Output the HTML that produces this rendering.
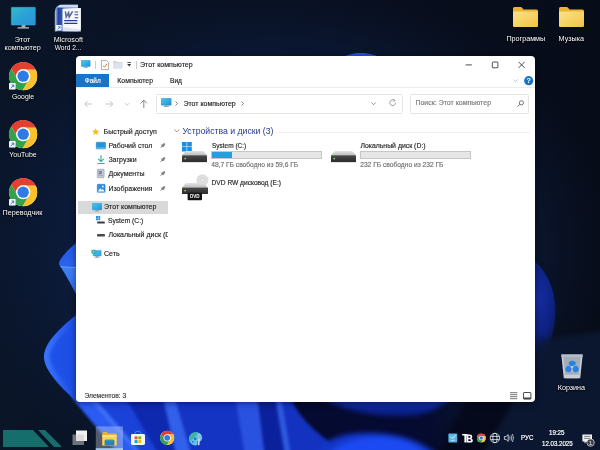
<!DOCTYPE html>
<html><head><meta charset="utf-8">
<style>
*{margin:0;padding:0;box-sizing:border-box}
html,body{width:600px;height:450px;overflow:hidden;background:#0a1224;font-family:"Liberation Sans",sans-serif}
#root{position:relative;width:600px;height:450px;overflow:hidden;background:#0a1226;filter:blur(0.35px)}
#wall{position:absolute;left:0;top:0}
.a{position:absolute}
svg{position:absolute;overflow:visible}
.dl{position:absolute;color:#fff;font-size:7.2px;line-height:9px;height:9px;text-align:center;text-shadow:0 0 1.5px #000,0 0.6px 1px rgba(0,0,0,.9);white-space:nowrap;transform:translateX(-50%)}
#win{position:absolute;left:76px;top:56px;width:459px;height:346px;background:#fff;border-radius:4px;box-shadow:0 1px 6px rgba(0,0,0,.5)}
.t{position:absolute;white-space:nowrap;font-size:7px;line-height:10px;height:10px;color:#1c1c1c;-webkit-text-stroke:0.14px currentColor}
.g{color:#6e6e6e}
</style></head>

<body><div id="root">
<svg id="wall" width="600" height="450" viewBox="0 0 600 450">
<defs>
<linearGradient id="bg" x1="0" y1="0" x2="1" y2="0"><stop offset="0" stop-color="#0a1528"/><stop offset=".6" stop-color="#080e1e"/><stop offset="1" stop-color="#070c19"/></linearGradient>
<radialGradient id="bgv" gradientUnits="userSpaceOnUse" cx="280" cy="250" r="330" gradientTransform="translate(280 250) scale(1 .82) translate(-280 -250)"><stop offset="0" stop-color="#0f2654" stop-opacity="1"/><stop offset=".5" stop-color="#0d2048" stop-opacity=".95"/><stop offset=".78" stop-color="#0b1a38" stop-opacity=".6"/><stop offset="1" stop-color="#0a152c" stop-opacity="0"/></radialGradient>
<linearGradient id="pa" gradientUnits="userSpaceOnUse" x1="0" y1="243" x2="0" y2="296"><stop offset="0" stop-color="#2556e4"/><stop offset=".44" stop-color="#2c62ec"/><stop offset=".47" stop-color="#3f80f6"/><stop offset="1" stop-color="#2e6af0"/></linearGradient>
<linearGradient id="pb" x1="0" y1="0" x2="1" y2="0"><stop offset="0" stop-color="#3a76fc"/><stop offset=".5" stop-color="#2a5ef0"/><stop offset="1" stop-color="#1a48e0"/></linearGradient>
<linearGradient id="bot" gradientUnits="userSpaceOnUse" x1="76" y1="0" x2="480" y2="0"><stop offset="0" stop-color="#2457ee"/><stop offset=".12" stop-color="#1236c6"/><stop offset=".24" stop-color="#1a44dc"/><stop offset=".42" stop-color="#1737cc"/><stop offset=".52" stop-color="#0c22a4"/><stop offset=".62" stop-color="#07126a"/><stop offset=".9" stop-color="#050a34"/><stop offset="1" stop-color="#080f24"/></linearGradient>
<radialGradient id="pr" gradientUnits="userSpaceOnUse" cx="538" cy="298" r="62" gradientTransform="translate(538 298) scale(.42 1) translate(-538 -298)"><stop offset="0" stop-color="#142ea4"/><stop offset=".55" stop-color="#0e2284"/><stop offset="1" stop-color="#081240"/></radialGradient>
<linearGradient id="tl" x1="0" y1="0" x2="0" y2="1"><stop offset="0" stop-color="#1434c4"/><stop offset="1" stop-color="#081a78"/></linearGradient>
<linearGradient id="fr" gradientUnits="userSpaceOnUse" x1="288" y1="0" x2="482" y2="0"><stop offset="0" stop-color="#050a30" stop-opacity="1"/><stop offset=".68" stop-color="#050a30" stop-opacity="1"/><stop offset=".96" stop-color="#050a30" stop-opacity="0"/><stop offset="1" stop-color="#050a30" stop-opacity="0"/></linearGradient>
<filter id="b1" color-interpolation-filters="sRGB"><feGaussianBlur stdDeviation="0.6"/></filter>
<filter id="b2" color-interpolation-filters="sRGB"><feGaussianBlur stdDeviation="1.6"/></filter>
<filter id="b3" color-interpolation-filters="sRGB"><feGaussianBlur stdDeviation="2.4"/></filter>
<filter id="b8" color-interpolation-filters="sRGB"><feGaussianBlur stdDeviation="8"/></filter>
</defs>
<rect width="600" height="450" fill="url(#bg)"/>
<rect width="600" height="450" fill="url(#bgv)"/>
<!-- right dark bloom glow -->
<path d="M530 258 C546 268 556 290 555.5 312 C555 336 546 360 530 380Z" fill="url(#pr)" filter="url(#b1)"/>
<!-- bottom blue body -->
<path d="M82 300 L82 398 L76.5 402 L97.5 427 L119 453 L300 453 L300 300 L82 300Z" fill="url(#bot)" filter="url(#b2)"/>
<!-- bottom bands -->
<g filter="url(#b2)">
  <path d="M71.0 396 L87.3 396 L138.1 454 L119.3 454Z" fill="#2a5cf2"/>
  <path d="M86.8 396 L93.5 396 L143.0 454 L137.5 454Z" fill="#3f72f8"/>
  <path d="M92.9 396 L125.1 396 L158.9 454 L142.4 454Z" fill="#1a42d8"/>
  <path d="M124.5 396 L163.2 396 L176.5 454 L158.3 454Z" fill="#0e29ae"/>
  <path d="M162.6 396 L174.8 396 L191.8 454 L175.9 454Z" fill="#3160ea"/>
  <path d="M174.2 396 L235.6 396 L245.3 454 L191.2 454Z" fill="#1434c4"/>
  <path d="M235.0 396 L257.9 396 L265.1 454 L244.7 454Z" fill="#2a52e0"/>
  <path d="M257.2 396 L275.6 396 L285.3 454 L264.5 454Z" fill="#0b209c"/>
  <path d="M275.0 396 L281.6 396 L291.3 454 L284.7 454Z" fill="#2e5ae0"/>
  <path d="M281.0 396 L330.6 396 L330.6 454 L290.7 454Z" fill="#1432c0"/>
</g>
<!-- bottom details -->
<g filter="url(#b2)">
  <path d="M290 396 L482 396 L482 456 L350 456 C332 444 300 424 290 396Z" fill="url(#fr)"/>
</g>
<g filter="url(#b3)">
  <path d="M318 396 C345 412 385 420 418 415 C434 411 446 404 452 396Z" fill="url(#tl)"/>
  <path d="M312 458 C316 448 326 440 344 435 C385 428 422 438 440 458Z" fill="#1236c8"/>
  <path d="M326 458 C335 446 350 438 375 437 C402 437 420 444 430 458Z" fill="#1c4af2"/>
</g>
<path d="M338 60 C346 54.5 354 53 361 53 C369 53 377 55 384 60Z" fill="#2a52e4" filter="url(#b1)"/>
<g filter="url(#b3)">
  <path d="M468 398 L514 398 L480 456 L436 456Z" fill="#04071a" opacity=".75"/>
  <path d="M516 398 L540 340 L610 330 L610 456 L482 456Z" fill="#0c1934" opacity=".85"/>
</g>
<!-- petal A -->
<path d="M80 239 L76 243 C70 248 62 256 59.6 261 C58.6 263.5 59 265.5 61 267.4 C66 275 72 286 76 294 L80 300Z" fill="url(#pa)" filter="url(#b1)"/>
<path d="M60.5 266.6 C66 267.2 72 267.4 80 267.8" stroke="#6ea4ff" stroke-width="0.9" fill="none" filter="url(#b1)"/>
<!-- petal B -->
<path d="M80 312 C62 326 44 342 44 357 C44 371 62 388 76.5 402 L80 406Z" fill="url(#pb)" filter="url(#b1)"/>
<path d="M80 319 C66 330 50 345 50 357 C50 369 66 384 80 398Z" fill="#1d4fe6" opacity=".9" filter="url(#b2)"/>
</svg>

<svg width="0" height="0" style="position:absolute">
<defs>
<linearGradient id="mon" x1="0" y1="0" x2="1" y2="1"><stop offset="0" stop-color="#36bcc4"/><stop offset=".5" stop-color="#2aa2d6"/><stop offset="1" stop-color="#2f8ed8"/></linearGradient>
<linearGradient id="fold" x1="0" y1="0" x2="1" y2="1"><stop offset="0" stop-color="#fbe28a"/><stop offset="1" stop-color="#f2c443"/></linearGradient>
<linearGradient id="wordb" gradientUnits="userSpaceOnUse" x1="0.8" y1="0" x2="12" y2="0"><stop offset="0" stop-color="#b4c4ea"/><stop offset=".12" stop-color="#8aa2da"/><stop offset=".3" stop-color="#22429c"/><stop offset=".55" stop-color="#2c50aa"/><stop offset="1" stop-color="#5f80cc"/></linearGradient>
<linearGradient id="bin" x1="0" y1="0" x2="1" y2="0"><stop offset="0" stop-color="#c4ccd4"/><stop offset=".5" stop-color="#aeb8c2"/><stop offset="1" stop-color="#98a2ae"/></linearGradient>
<symbol id="chrome" viewBox="-50 -50 100 100">
  <circle r="49.5" fill="#fff"/>
  <path id="cseg" d="M0 -23 L44.4 -23 A50 50 0 0 0 -42.1 -26.9 L-19.9 11.5 A23 23 0 0 1 0 -23Z" fill="#e5402f"/>
  <path d="M0 -23 L44.4 -23 A50 50 0 0 0 -42.1 -26.9 L-19.9 11.5 A23 23 0 0 1 0 -23Z" fill="#fbc12c" transform="rotate(120)"/>
  <path d="M0 -23 L44.4 -23 A50 50 0 0 0 -42.1 -26.9 L-19.9 11.5 A23 23 0 0 1 0 -23Z" fill="#36a14b" transform="rotate(240)"/>
  <circle r="25" fill="#fff"/>
  <circle r="20" fill="#2f7be5"/>
</symbol>
<symbol id="short" viewBox="0 0 10 10">
  <rect x="0" y="0" width="10" height="10" rx="1" fill="#f4f7fb"/>
  <path d="M2.5 7.6 L6.6 3.5 M3.8 3 H7 V6.2" stroke="#2a6fd0" stroke-width="1.4" fill="none"/>
</symbol>
<symbol id="folder" viewBox="0 0 25 20">
  <path d="M0 1.5 Q0 0 1.5 0 H7.5 Q8.6 0 9.3 1 L10.5 2.6 H23.5 Q25 2.6 25 4.1 V18.5 Q25 20 23.5 20 H1.5 Q0 20 0 18.5Z" fill="#e9b531"/>
  <path d="M0 4.6 H23.7 Q25 4.6 25 5.9 V18.6 Q25 20 23.6 20 H1.4 Q0 20 0 18.6Z" fill="url(#fold)"/>
</symbol>
</defs></svg>

<!-- This PC -->
<svg class="a" style="left:10.6px;top:6.8px" width="25" height="22" viewBox="0 0 25 22">
  <rect x="0.3" y="0.3" width="24" height="17.8" rx="0.6" fill="url(#mon)" stroke="#4aa6dc" stroke-width="0.5"/>
  <rect x="10.6" y="18.1" width="3.8" height="2.4" fill="#a9b5c1"/>
  <rect x="6.6" y="20.3" width="11.4" height="1.2" fill="#c3ccd5"/>
</svg>
<div class="dl" style="left:22.6px;top:34.6px">Этот</div>
<div class="dl" style="left:22.6px;top:43.3px">компьютер</div>

<!-- Word -->
<svg class="a" style="left:54px;top:4px" width="28" height="28" viewBox="0 0 28 28">
  <path d="M6.4 0.8 H24 V27.4 H0.8 V8.4 Q1 1.6 6.4 0.8Z" fill="url(#wordb)"/>
  <path d="M6.4 0.8 H24 V3.4 H3 Q4 1.4 6.4 0.8Z" fill="#cfd9f0"/>
  <path d="M8.4 5 L26.8 3.9 V27.6 L8.4 27.2Z" fill="#dde3ee"/>
  <path d="M9 4.8 L26.8 3.9 V25.6 L9 23.2Z" fill="#f6f8fd"/>
  <path d="M11.4 7.4 L12.2 13 L14.6 8.6 L15.2 13 L18.6 7.4" stroke="#56679c" stroke-width="1.5" fill="none" stroke-linejoin="miter"/>
  <path d="M20.6 8H24.2 M20.6 10.8H24.2 M20.6 13.8H24.2" stroke="#2b4a9c" stroke-width="1.1"/>
  <path d="M10.2 16.5H23.4 M10.2 19.4H23.4" stroke="#1f3f96" stroke-width="1.25"/>
</svg>
<svg class="a" style="left:55.5px;top:25.2px" width="5.8" height="5.8"><use href="#short"/></svg>
<div class="dl" style="left:68.3px;top:34.6px">Microsoft</div>
<div class="dl" style="left:68.3px;top:43.3px;transform:translateX(-50%) scaleX(.92)">Word 2...</div>

<!-- Chrome x3 -->
<svg class="a" style="left:8.6px;top:62px" width="28.4" height="28.4"><use href="#chrome"/></svg>
<svg class="a" style="left:9px;top:83.2px" width="6.8" height="6.8"><use href="#short"/></svg>
<div class="dl" style="left:23px;top:92.3px;transform:translateX(-50%) scaleX(.95)">Google</div>

<svg class="a" style="left:8.7px;top:119.6px" width="28.4" height="28.4"><use href="#chrome"/></svg>
<svg class="a" style="left:9px;top:140.8px" width="6.8" height="6.8"><use href="#short"/></svg>
<div class="dl" style="left:23px;top:149.9px;transform:translateX(-50%) scaleX(.97)">YouTube</div>

<svg class="a" style="left:8.7px;top:178px" width="28.4" height="28.4"><use href="#chrome"/></svg>
<svg class="a" style="left:9px;top:199.2px" width="6.8" height="6.8"><use href="#short"/></svg>
<div class="dl" style="left:22.5px;top:208.3px">Переводчик</div>

<!-- Folders -->
<svg class="a" style="left:513px;top:7px" width="25" height="20"><use href="#folder"/></svg>
<div class="dl" style="left:525.8px;top:34.4px">Программы</div>
<svg class="a" style="left:559px;top:7px" width="25" height="20"><use href="#folder"/></svg>
<div class="dl" style="left:571.3px;top:34.4px">Музыка</div>

<!-- Recycle bin -->
<svg class="a" style="left:560.5px;top:353.8px" width="22" height="24.6" viewBox="0 0 22.4 25">
  <path d="M0.3 0.6 H22.1 L19.6 24.6 H2.8 Z" fill="#c3cad2"/>
  <path d="M0.3 0.6 H22.1 L21.8 3 H0.6Z" fill="#b4bcc6"/>
  <path d="M2.6 3 H19.8 L18.2 21 H4.2Z" fill="#a3acb7"/>
  <path d="M4.2 21 H18.2 L17.9 24.6 H4.5Z" fill="#c9cfd7"/>
  <g fill="#2b82de">
    <ellipse cx="11.4" cy="9.8" rx="3.6" ry="2.9"/>
    <ellipse cx="7.7" cy="15.2" rx="3" ry="3.4" transform="rotate(30 7.7 15.2)"/>
    <ellipse cx="14.9" cy="15.2" rx="3" ry="3.4" transform="rotate(-30 14.9 15.2)"/>
  </g>
  <path d="M11.2 13.4 L11.2 18.4 M11.2 13.4 L7 10.8 M11.2 13.4 L15.6 10.8" stroke="#a6c8ec" stroke-width="0.9" opacity=".8"/>
  <circle cx="11.2" cy="13.4" r="1.2" fill="#b9d5f2" opacity=".85"/>
</svg>
<div class="dl" style="left:571.4px;top:382.8px">Корзина</div>

<svg width="0" height="0" style="position:absolute"><defs>
<linearGradient id="mons" x1="0" y1="0" x2="1" y2="1"><stop offset="0" stop-color="#4cc7ee"/><stop offset="1" stop-color="#1d93d6"/></linearGradient>
<symbol id="pc" viewBox="0 0 10 9">
  <rect x="0.2" y="0.2" width="9.6" height="6.6" rx="0.5" fill="url(#mons)" stroke="#1980c4" stroke-width="0.4"/>
  <rect x="4.2" y="6.8" width="1.6" height="1" fill="#7d8b98"/>
  <rect x="2.6" y="7.7" width="4.8" height="0.8" fill="#8d9aa6"/>
</symbol>
<symbol id="pin" viewBox="0 0 6 6">
  <path d="M4.7 1.3 L2.8 3.2" stroke="#808080" stroke-width="2.4" stroke-linecap="round"/>
  <path d="M1.7 1.9 L4.1 4.3" stroke="#808080" stroke-width="1" stroke-linecap="round"/>
  <path d="M2.4 3.6 L0.5 5.5" stroke="#808080" stroke-width="0.8" stroke-linecap="round"/>
</symbol>
<linearGradient id="drv" x1="0" y1="0" x2="0" y2="1"><stop offset="0" stop-color="#4a4a4a"/><stop offset="1" stop-color="#2a2a2a"/></linearGradient>
<linearGradient id="drvtop" x1="0" y1="0" x2="0" y2="1"><stop offset="0" stop-color="#e4e4e4"/><stop offset="1" stop-color="#bdbdbd"/></linearGradient>
<symbol id="drive" viewBox="0 0 26 12">
  <path d="M4 0 H22 L26 4.5 H0Z" fill="url(#drvtop)"/>
  <rect x="0" y="4.5" width="26" height="7.2" rx="0.6" fill="url(#drv)"/>
  <rect x="2.6" y="7.2" width="1.6" height="1.4" fill="#7fe35a"/>
</symbol>
</defs></svg>

<div id="win"></div>

<!-- title bar -->
<svg class="a" style="left:81px;top:60.3px" width="9.6" height="8.6"><use href="#pc"/></svg>
<div class="a" style="left:95px;top:60.5px;width:0.7px;height:8px;background:#c9c9c9"></div>
<svg class="a" style="left:101px;top:59.8px" width="8" height="10" viewBox="0 0 8 10">
  <path d="M0.4 0.4 H5.4 L7.6 2.6 V9.6 H0.4Z" fill="#fff" stroke="#8c8c8c" stroke-width="0.7"/>
  <path d="M2 5.6 L3.4 7.2 L6 3.8" stroke="#e07b2e" stroke-width="1" fill="none"/>
</svg>
<svg class="a" style="left:113px;top:61.4px" width="9.4" height="7.4" viewBox="0 0 9.4 7.4">
  <path d="M0 0.6 Q0 0 .6 0 H3 L4 1 H8.8 Q9.4 1 9.4 1.6 V6.8 Q9.4 7.4 8.8 7.4 H.6 Q0 7.4 0 6.8Z" fill="#cdd5e0"/>
  <path d="M0 2 H9.4 V6.8 Q9.4 7.4 8.8 7.4 H.6 Q0 7.4 0 6.8Z" fill="#dde3ec"/>
</svg>
<svg class="a" style="left:126.8px;top:62.4px" width="4.4" height="5" viewBox="0 0 4.4 5">
  <path d="M0.4 0.5H4" stroke="#333" stroke-width="0.8"/><path d="M0.2 2 H4.2 L2.2 4.6Z" fill="#333"/>
</svg>
<div class="a" style="left:135.6px;top:60.5px;width:0.7px;height:8px;background:#c9c9c9"></div>
<div class="t" style="left:140px;top:59.8px;font-size:7.05px;color:#1a1a1a">Этот компьютер</div>

<!-- caption buttons -->
<svg class="a" style="left:465px;top:60px" width="62" height="10" viewBox="0 0 62 10">
  <path d="M0.6 4.9 H6.8" stroke="#222" stroke-width="0.8"/>
  <rect x="27.3" y="2" width="5.6" height="5.8" rx="0.8" fill="none" stroke="#222" stroke-width="0.8"/>
  <path d="M53.6 1.9 L59.6 7.9 M59.6 1.9 L53.6 7.9" stroke="#222" stroke-width="0.8"/>
</svg>

<!-- ribbon tabs -->
<div class="a" style="left:76px;top:74px;width:32.8px;height:13.4px;background:#1a73c4"></div>
<div class="t" style="left:84.8px;top:76px;color:#fff;font-size:6.5px">Файл</div>
<div class="t" style="left:117.3px;top:76px;font-size:6.9px">Компьютер</div>
<div class="t" style="left:170px;top:76px;font-size:6.6px">Вид</div>
<div class="a" style="left:76px;top:87.4px;width:459px;height:0.7px;background:#ebebeb"></div>
<svg class="a" style="left:513.4px;top:78.6px" width="5" height="3.4" viewBox="0 0 5 3.4"><path d="M0.4 0.5 L2.5 2.7 L4.6 0.5" stroke="#b4b4b4" stroke-width="0.8" fill="none"/></svg>
<svg class="a" style="left:524.4px;top:75.8px" width="9.4" height="9.4" viewBox="0 0 9.4 9.4">
  <circle cx="4.7" cy="4.7" r="4.6" fill="#1a73c4"/>
  <text x="4.7" y="7.3" font-family="Liberation Sans" font-weight="700" font-size="7.2" fill="#fff" text-anchor="middle">?</text>
</svg>

<!-- nav row -->
<svg class="a" style="left:84px;top:99px" width="66" height="10" viewBox="0 0 66 10">
  <g fill="none" stroke="#b9b9b9" stroke-width="0.8">
    <path d="M8 5 H0.8 M3.8 2 L0.8 5 L3.8 8"/>
    <path d="M21.6 5 H28.8 M25.8 2 L28.8 5 L25.8 8"/>
    <path d="M41.2 4.2 L43.2 6.2 L45.2 4.2"/>
  </g>
  <path d="M59.8 9 V1.2 M56.6 4.4 L59.8 1.2 L63 4.4" fill="none" stroke="#6a6a6a" stroke-width="0.8"/>
</svg>
<div class="a" style="left:156.4px;top:93.6px;width:246.4px;height:20px;border:0.8px solid #e5e5e5;border-radius:1.5px;background:#fff"></div>
<svg class="a" style="left:161px;top:98px" width="10.6" height="9.5"><use href="#pc"/></svg>
<svg class="a" style="left:175.4px;top:101.4px" width="3" height="5" viewBox="0 0 3 5"><path d="M0.5 0.5 L2.5 2.5 L0.5 4.5" stroke="#555" stroke-width="0.7" fill="none"/></svg>
<div class="t" style="left:183.4px;top:98.9px;font-size:7px">Этот компьютер</div>
<svg class="a" style="left:241.4px;top:101.4px" width="3" height="5" viewBox="0 0 3 5"><path d="M0.5 0.5 L2.5 2.5 L0.5 4.5" stroke="#555" stroke-width="0.7" fill="none"/></svg>
<svg class="a" style="left:371px;top:101.6px" width="5" height="3.4" viewBox="0 0 5 3.4"><path d="M0.4 0.5 L2.5 2.7 L4.6 0.5" stroke="#666" stroke-width="0.7" fill="none"/></svg>
<svg class="a" style="left:388.6px;top:99.4px" width="7.4" height="7.4" viewBox="0 0 7.4 7.4">
  <path d="M6.6 3.7 A2.9 2.9 0 1 1 5.5 1.4" fill="none" stroke="#777" stroke-width="0.7"/>
  <path d="M4 0.3 L6 1.4 L4.6 2.9" fill="none" stroke="#777" stroke-width="0.7"/>
</svg>
<div class="a" style="left:409.6px;top:93.6px;width:119px;height:20px;border:0.8px solid #e5e5e5;border-radius:1.5px;background:#fff"></div>
<div class="t g" style="left:415.4px;top:98px;font-size:7px;color:#777">Поиск: Этот компьютер</div>
<svg class="a" style="left:516.6px;top:99.6px" width="7.2" height="7.2" viewBox="0 0 7.2 7.2">
  <circle cx="4.4" cy="2.8" r="2.1" fill="none" stroke="#555" stroke-width="0.8"/>
  <path d="M2.9 4.3 L0.6 6.6" stroke="#555" stroke-width="0.9"/>
</svg>

<!-- sidebar -->
<div class="a" style="left:78px;top:200.6px;width:89.6px;height:13px;background:#d9d9d9"></div>
<svg class="a" style="left:92.4px;top:128.4px" width="7.4" height="7.2" viewBox="0 0 10 10"><path d="M5 0.3 L6.5 3.5 L9.9 3.9 L7.4 6.2 L8.1 9.7 L5 8 L1.9 9.7 L2.6 6.2 L0.1 3.9 L3.5 3.5Z" fill="#f2c01e"/></svg>
<div class="t" style="left:103.6px;top:127.3px">Быстрый доступ</div>

<svg class="a" style="left:96px;top:142.4px" width="9.8" height="7.2" viewBox="0 0 9.8 7.2">
  <rect x="0.2" y="0.2" width="9.4" height="6.8" rx="0.7" fill="#2393e0" stroke="#1777c2" stroke-width="0.4"/>
  <rect x="0.5" y="5.5" width="8.8" height="1.2" fill="#6cc8f4"/>
</svg>
<div class="t" style="left:108.4px;top:141.4px">Рабочий стол</div>
<svg class="a" style="left:159.6px;top:143.4px" width="5.4" height="5.4"><use href="#pin"/></svg>

<svg class="a" style="left:96.6px;top:155.2px" width="8" height="9.4" viewBox="0 0 8 9.4">
  <path d="M4 0.2 V6.4 M1.2 3.8 L4 6.6 L6.8 3.8" stroke="#2ea99a" stroke-width="1.1" fill="none"/>
  <path d="M0.4 8.6 H7.6" stroke="#2ea99a" stroke-width="1"/>
</svg>
<div class="t" style="left:108.4px;top:155.4px">Загрузки</div>
<svg class="a" style="left:159.6px;top:157.4px" width="5.4" height="5.4"><use href="#pin"/></svg>

<svg class="a" style="left:97px;top:169.4px" width="7.4" height="9" viewBox="0 0 7.4 9">
  <rect x="0.3" y="0.3" width="6.8" height="8.4" rx="0.5" fill="#c6cdd8" stroke="#8a94a4" stroke-width="0.6"/>
  <rect x="1.6" y="1.8" width="3.4" height="3.6" fill="#8490a2"/>
  <path d="M1.6 6.6 H5.8" stroke="#8f9aa8" stroke-width="0.6"/>
</svg>
<div class="t" style="left:108.4px;top:169.4px">Документы</div>
<svg class="a" style="left:159.6px;top:171.4px" width="5.4" height="5.4"><use href="#pin"/></svg>

<svg class="a" style="left:96.6px;top:183.8px" width="8.4" height="8.6" viewBox="0 0 8.4 8.6">
  <rect x="0.3" y="0.3" width="7.8" height="8" rx="0.6" fill="#2e8fe4" stroke="#1b6fc4" stroke-width="0.5"/>
  <path d="M0.8 7.6 L3.2 4.2 L4.8 6 L5.8 5 L7.6 7.6Z" fill="#fff"/>
  <circle cx="5.8" cy="2.5" r="0.9" fill="#fff"/>
</svg>
<div class="t" style="left:108.4px;top:183.6px">Изображения</div>
<svg class="a" style="left:159.6px;top:185.6px" width="5.4" height="5.4"><use href="#pin"/></svg>

<svg class="a" style="left:91.6px;top:202.6px" width="10" height="9"><use href="#pc"/></svg>
<div class="t" style="left:104px;top:202.4px">Этот компьютер</div>

<svg class="a" style="left:96.4px;top:216px" width="9" height="8.4" viewBox="0 0 9 8.4">
  <path d="M0 0H1.9V1.9H0Z M2.3 0H4.2V1.9H2.3Z M0 2.3H1.9V4.2H0Z M2.3 2.3H4.2V4.2H2.3Z" fill="#1f8fe0"/>
  <rect x="1.2" y="5.4" width="7.6" height="2.2" rx="0.4" fill="#3a3a3a"/>
</svg>
<div class="t" style="left:108.4px;top:216.4px;transform-origin:0 50%;transform:scaleX(.953)">System (C:)</div>

<svg class="a" style="left:96.8px;top:233.6px" width="8" height="2.6" viewBox="0 0 8 2.6"><rect width="8" height="2.4" rx="0.5" fill="#4a4a4a"/></svg>
<div class="a" style="left:108.4px;top:230px;width:59.6px;height:10px;overflow:hidden"><div class="t" style="left:0;top:0">Локальный диск (D:)</div></div>

<svg class="a" style="left:91.4px;top:248.6px" width="10.4" height="9.6" viewBox="0 0 10.4 9.6">
  <rect x="2.2" y="1.4" width="8" height="5.6" rx="0.5" fill="#39b3e6" stroke="#1a86c6" stroke-width="0.4"/>
  <rect x="5.4" y="7" width="1.6" height="1" fill="#7d8b98"/><rect x="3.8" y="7.9" width="4.8" height="0.8" fill="#8d9aa6"/>
  <circle cx="2.6" cy="2.8" r="2.4" fill="#2aa7a0"/><path d="M0.4 2.8H4.8 M2.6 0.5V5.1" stroke="#bff0ea" stroke-width="0.4"/>
</svg>
<div class="t" style="left:104px;top:249.0px">Сеть</div>

<!-- content -->
<svg class="a" style="left:173.6px;top:129.4px" width="5.6" height="3.8" viewBox="0 0 5.6 3.8"><path d="M0.4 0.5 L2.8 3 L5.2 0.5" stroke="#6a6a6a" stroke-width="0.7" fill="none"/></svg>
<div class="t" style="left:182.4px;top:125.6px;font-size:8.7px;line-height:11px;height:11px;color:#27398e;-webkit-text-stroke:0">Устройства и диски (3)</div>
<div class="a" style="left:278px;top:131.6px;width:252px;height:0.6px;background:#eef0f6"></div>

<!-- C: -->
<svg class="a" style="left:181.5px;top:142.4px" width="10" height="9.5" viewBox="0 0 11 10.4">
  <path d="M0 0H5.1V4.9H0Z M5.7 0H10.8V4.9H5.7Z M0 5.5H5.1V10.4H0Z M5.7 5.5H10.8V10.4H5.7Z" fill="#1b8fe4"/>
</svg>
<svg class="a" style="left:182.2px;top:151px" width="25" height="11.6"><use href="#drive"/></svg>
<div class="t" style="left:211.8px;top:140.6px;font-size:6.9px;transform-origin:0 50%;transform:scaleX(.942)">System (C:)</div>
<div class="a" style="left:211px;top:151.4px;width:110.6px;height:7.4px;background:#e6e6e6;border:0.7px solid #c6c6c6"></div>
<div class="a" style="left:211.7px;top:152.1px;width:20px;height:6px;background:#26a0da"></div>
<div class="t g" style="left:211.2px;top:159.7px;font-size:6.66px">48,7 ГБ свободно из 59,6 ГБ</div>

<!-- D: -->
<svg class="a" style="left:331.2px;top:151px" width="25" height="11.6"><use href="#drive"/></svg>
<div class="t" style="left:360.4px;top:140.6px;font-size:6.9px">Локальный диск (D:)</div>
<div class="a" style="left:360px;top:151.4px;width:110.6px;height:7.4px;background:#e6e6e6;border:0.7px solid #c6c6c6"></div>
<div class="t g" style="left:360.2px;top:159.7px;font-size:6.66px">232 ГБ свободно из 232 ГБ</div>

<!-- DVD -->
<svg class="a" style="left:181.6px;top:174px" width="26" height="27" viewBox="0 0 26 27">
  <circle cx="20.4" cy="6.2" r="5.5" fill="#dedede" stroke="#c6c6c6" stroke-width="0.5"/>
  <circle cx="20.4" cy="6.2" r="1.5" fill="#f6f6f6" stroke="#b5b5b5" stroke-width="0.4"/>
  <path d="M4 9 H22 L26 13.5 H0Z" fill="url(#drvtop)"/>
  <rect x="0" y="13.5" width="26" height="6.6" rx="0.6" fill="url(#drv)"/>
  <rect x="2.4" y="16" width="1.6" height="1.3" fill="#7fe35a"/>
  <rect x="5.6" y="18.8" width="14.4" height="7.4" rx="1" fill="#141414"/>
  <text x="12.8" y="24.3" font-family="Liberation Sans" font-weight="700" font-size="4.6" fill="#fff" text-anchor="middle">DVD</text>
</svg>
<div class="t" style="left:211.6px;top:178px;font-size:6.62px">DVD RW дисковод (E:)</div>

<!-- status bar -->
<div class="t" style="left:84.4px;top:391px;font-size:6.7px;color:#333">Элементов: 3</div>
<svg class="a" style="left:510px;top:391.8px" width="22" height="8" viewBox="0 0 22 8">
  <path d="M0 0.7H7.4 M0 2.7H7.4 M0 4.7H7.4 M0 6.7H7.4" stroke="#484848" stroke-width="0.75"/>
  <rect x="13.5" y="0.5" width="7.4" height="6.6" rx="0.5" fill="#fff" stroke="#3a3a3a" stroke-width="0.9"/>
  <path d="M13.5 6.2 H20.9" stroke="#3a3a3a" stroke-width="1.4"/>
</svg>

<!-- taskbar -->
<svg class="a" style="left:0;top:426px" width="600" height="24" viewBox="0 426 600 24">
  <path d="M3 430 H33 L49 447 H3Z" fill="#166e6c"/>
  <path d="M38 430 H45 L62 447 H54Z" fill="#166e6c"/>
  <!-- task view -->
  <rect x="72.5" y="434.5" width="11.5" height="10.5" fill="#6f7278"/>
  <rect x="76" y="430.5" width="11" height="10.5" fill="#f2f2f2"/>
  <rect x="76" y="434.5" width="8" height="6.5" fill="#c9c9c9" opacity=".55"/>
  <!-- explorer highlight -->
  <rect x="95.8" y="426.4" width="27.2" height="23.6" fill="#e8ecf8" opacity=".33"/>
  <rect x="95.8" y="448.2" width="27.2" height="1.8" fill="#a9cdf0"/>
  <!-- explorer icon -->
  <g transform="translate(102.4,432)">
    <path d="M0 1 Q0 0 1 0 H4.4 L5.6 1.6 H13.2 Q14.2 1.6 14.2 2.6 V13.4 H0Z" fill="#eeb32a"/>
    <path d="M0 3 H14.2 V13.4 H0Z" fill="#fbd356"/>
    <path d="M0 3 H14.2 V5 H0Z" fill="#fde082"/>
    <path d="M2.2 13.4 V9.2 Q2.2 7.8 3.6 7.8 H10.6 Q12 7.8 12 9.2 V13.4Z" fill="#2b7fc6"/>
    <path d="M3.8 7.8 H10.4 Q11 7.8 11 8.6 V9.6 H3.2 V8.6 Q3.2 7.8 3.8 7.8Z" fill="#2a9aa6"/>
  </g>
  <!-- store -->
  <g transform="translate(131,431)">
    <path d="M4.2 3.4 V2 Q4.2 0.4 5.8 0.4 H8.2 Q9.8 0.4 9.8 2 V3.4" fill="none" stroke="#2f8fe0" stroke-width="1"/>
    <rect x="0" y="3" width="14" height="11" rx="1.4" fill="#f4f6f8"/>
    <rect x="3.6" y="5.4" width="2.9" height="2.9" fill="#f25022"/>
    <rect x="7.3" y="5.4" width="2.9" height="2.9" fill="#7fba00"/>
    <rect x="3.6" y="9.1" width="2.9" height="2.9" fill="#00a4ef"/>
    <rect x="7.3" y="9.1" width="2.9" height="2.9" fill="#ffb900"/>
  </g>
  <!-- chrome -->
  <use href="#chrome" x="160" y="430.6" width="14.4" height="14.4"/>
  <!-- paint-like -->
  <g transform="translate(188.8,432)">
    <path d="M7 0.3 C11 0.3 13.4 2.8 13.4 6 C13.4 8.6 11.8 9.6 10.2 9.4 C8.8 9.2 8.4 10.2 8.8 11.2 C9.2 12.6 8.4 13.4 6.8 13.4 C3 13.4 0.3 10.6 0.3 7 C0.3 3.2 3.2 0.3 7 0.3Z" fill="#62c0ee"/>
    <path d="M7 0.3 C3.2 0.3 0.3 3.2 0.3 7 C0.3 8 0.6 9 1 9.8 C3.4 8 6.6 4.6 9.4 0.8 C8.6 0.4 7.8 0.3 7 0.3Z" fill="#3db79c"/>
    <circle cx="6.4" cy="6.8" r="1.3" fill="#1f6fd0"/>
    <circle cx="4" cy="9.8" r="1.1" fill="#2a8ae0"/>
    <path d="M10.7 2.6 L9.9 12.6" stroke="#d8dde2" stroke-width="1.5" stroke-linecap="round"/>
    <path d="M10.7 2.6 L10.3 7" stroke="#b9aa90" stroke-width="1.3"/>
  </g>
  <!-- tray icon 1 -->
  <rect x="448.4" y="433.4" width="8.8" height="9.2" rx="0.8" fill="#58b6e6"/>
  <path d="M450 436.4 L452.6 438.6 L455.6 435.2 M451 440.8 L454.6 440.2" stroke="#c7eafa" stroke-width="1.1" fill="none" opacity=".85"/>
  <!-- tray TB -->
  <g fill="#fff">
    <path d="M462.2 434 H467.4 V435.6 H466.2 V442.6 H464.4 V435.6 H462.2Z"/>
    <path d="M466.4 434.6 H469.9 Q472.3 434.6 472.3 436.7 Q472.3 437.9 471.3 438.4 Q472.8 438.9 472.8 440.4 Q472.8 442.6 470.1 442.6 H466.4Z M468.3 436.1 V437.8 H469.6 Q470.5 437.8 470.5 436.95 Q470.5 436.1 469.6 436.1Z M468.3 439.2 V441.1 H469.9 Q470.9 441.1 470.9 440.15 Q470.9 439.2 469.9 439.2Z" fill-rule="evenodd"/>
  </g>
  <!-- tray chrome -->
  <use href="#chrome" x="476.8" y="433.5" width="9" height="9"/>
  <!-- globe -->
  <g fill="none" stroke="#e8ecf2" stroke-width="0.8">
    <circle cx="494.9" cy="438" r="4.7"/>
    <ellipse cx="494.9" cy="438" rx="2.1" ry="4.7"/>
    <path d="M490.4 436.4 H499.4 M490.4 439.6 H499.4"/>
  </g>
  <!-- speaker -->
  <g fill="none" stroke="#e8ecf2" stroke-width="0.8">
    <path d="M504.4 436.6 H506 L508.2 434.6 V441.4 L506 439.4 H504.4Z"/>
    <path d="M509.6 436.4 Q510.6 438 509.6 439.6 M511 435.2 Q512.6 438 511 440.8 M512.4 434 Q514.6 438 512.4 442" stroke-width="0.7"/>
  </g>
  <!-- notification -->
  <g>
    <path d="M582.4 434.4 H592 V441.4 H586.6 L584.6 443.4 V441.4 H582.4Z" fill="#f2f2f2"/>
    <path d="M584 436.4 H590.4 M584 438.4 H590.4" stroke="#333" stroke-width="0.6"/>
    <circle cx="590.6" cy="442.6" r="3.7" fill="#3a3f48" stroke="#e8e8e8" stroke-width="0.7"/>
    <text x="590.6" y="444.7" font-family="Liberation Sans" font-size="5.4" fill="#fff" text-anchor="middle">1</text>
  </g>
</svg>
<div class="t" style="left:520.6px;top:433.3px;color:#fff;-webkit-text-stroke:0.2px #fff;font-size:6.7px;transform-origin:0 50%;transform:scaleX(.92)">РУС</div>
<div class="t" style="left:549px;top:428.2px;color:#fff;-webkit-text-stroke:0.2px #fff;font-size:6.9px;transform-origin:0 50%;transform:scaleX(.9)">19:25</div>
<div class="t" style="left:541.6px;top:439px;color:#fff;-webkit-text-stroke:0.2px #fff;font-size:6.9px;transform-origin:0 50%;transform:scaleX(.89)">12.03.2025</div>

</div></body></html>
